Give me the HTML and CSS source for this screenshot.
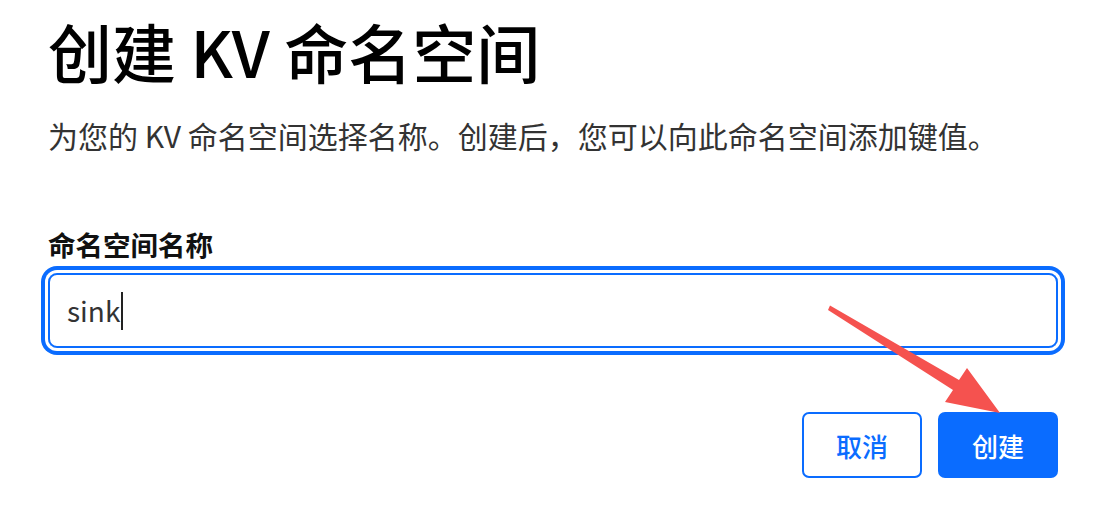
FILE: index.html
```html
<!DOCTYPE html>
<html lang="zh-CN">
<head>
    <meta charset="UTF-8">
    <title>创建 KV 命名空间</title>
    <link rel="stylesheet" href="styles.css">
</head>
<body>
    <div class="panel">
        <h1 class="title">创建 KV 命名空间</h1>
        <p class="subtitle">为您的 KV 命名空间选择名称。创建后，您可以向此命名空间添加键值。</p>

        <div class="form-group">
            <label class="field-label">命名空间名称</label>
            <div class="field-input">sink<span class="caret"></span></div>
        </div>

        <div class="actions">
            <button class="btn btn-outline">取消</button>
            <button class="btn btn-primary">创建</button>
        </div>
    </div>

    <!-- annotation arrow -->
    <svg class="arrow" width="1114" height="532" viewBox="0 0 1114 532">
        <polygon points="830,305.5 959,380 967,368 1000,413 945,402 953,390 828,310" fill="#f5524f"/>
    </svg>
</body>
</html>
```

FILE: styles.css
```css
body {
    margin: 0;
    background-color: #fff;
    font-family: "Noto Sans CJK SC", "Noto Sans", sans-serif;
    color: #000;
}
.panel {
    padding: 10px 56px 0 48px;
}
.title {
    margin: 0;
    font-size: 64px;
    line-height: 80px;
    font-weight: 500;
    letter-spacing: 0;
}
.subtitle {
    margin: 25px 0 0;
    font-size: 30px;
    line-height: 40px;
    color: #333;
}
.form-group {
    margin-top: 71px;
}
.field-label {
    display: block;
    font-size: 27.5px;
    line-height: 36px;
    font-weight: bold;
    color: #111;
}
.field-input {
    margin-top: 11px;
    height: 71px;
    border: 2px solid #0a6cff;
    border-radius: 9px;
    box-shadow: 0 0 0 3px #fff, 0 0 0 7px #0a6cff;
    padding: 0 17px;
    font-size: 28px;
    line-height: 71px;
    color: #333;
    display: flex;
    align-items: center;
}
.caret {
    display: inline-block;
    width: 2px;
    height: 38px;
    background-color: #222;
    margin-left: 1px;
}
.actions {
    display: flex;
    justify-content: flex-end;
    gap: 16px;
    margin-top: 64px;
}
.btn {
    width: 120px;
    height: 66px;
    border-radius: 7px;
    font-family: "Noto Sans CJK SC", sans-serif;
    font-size: 26px;
    font-weight: 500;
    cursor: pointer;
}
.btn-outline {
    background-color: #fff;
    border: 2px solid #0a6cff;
    color: #0a6cff;
}
.btn-primary {
    background-color: #0a6cff;
    border: none;
    color: #fff;
}
.arrow {
    position: absolute;
    left: 0;
    top: 0;
    pointer-events: none;
}
```
